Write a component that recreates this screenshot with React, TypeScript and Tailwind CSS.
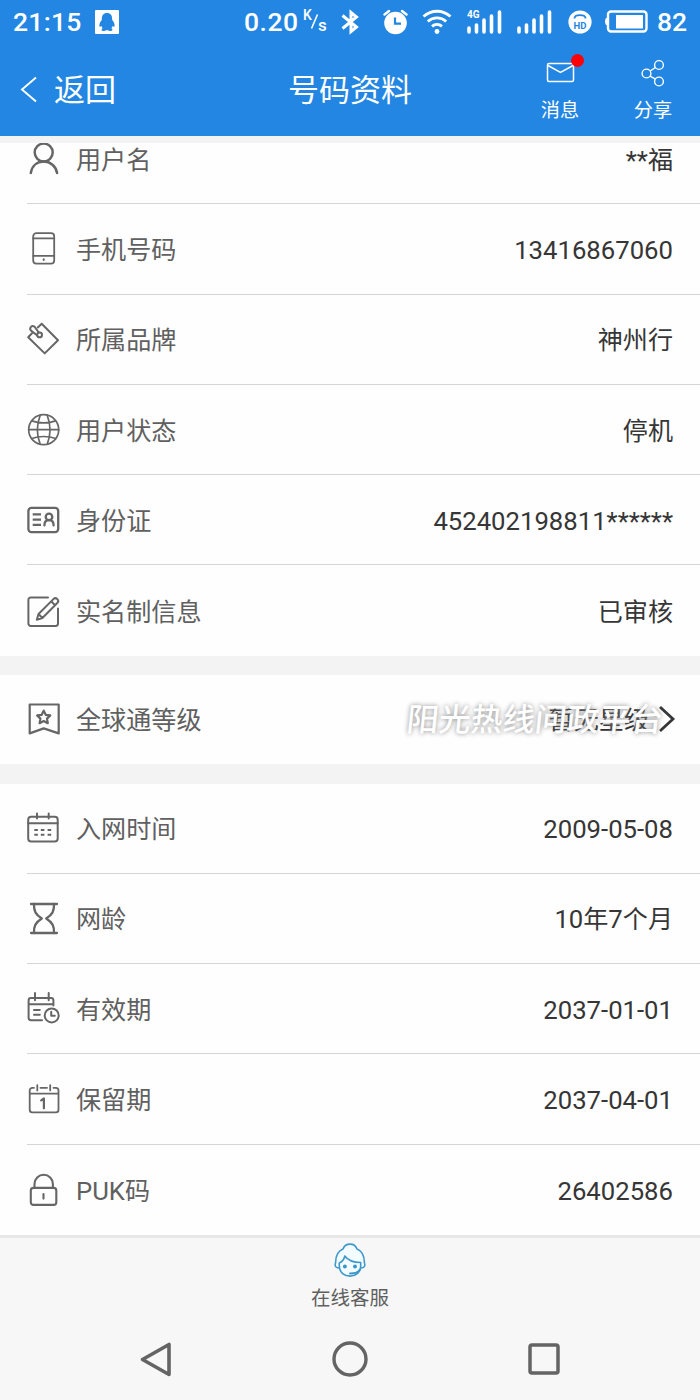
import React from "react";
import type { ReactNode } from "react";

function Icon({ children, w = 1.9 }: { children: ReactNode; w?: number }) {
  return (
    <svg className="h-9 w-9 shrink-0" viewBox="0 0 36 36" fill="none" stroke="#666" strokeWidth={w} strokeLinecap="round" strokeLinejoin="round">
      {children}
    </svg>
  );
}

const icons: Record<string, ReactNode> = {
  user: (
    <Icon w={2.5}>
      <circle cx="17.7" cy="11.6" r="9" />
      <path d="M4.8 32C6 25 11 20.6 17.7 20.6S29.9 25 31.1 32" />
    </Icon>
  ),
  phone: (
    <Icon w={1.8}>
      <rect x="7.2" y="2.2" width="21" height="30.4" rx="3.2" />
      <path d="M7.2 7.4h21M7.2 24.8h21" />
      <path d="M17.7 28.3v.8" strokeWidth="2" />
    </Icon>
  ),
  tag: (
    <Icon w={2}>
      <path d="M11.8 5.4 15.7 1.8 32 18.3 18.7 31.4 2.2 15.2 6 11.3" />
      <path d="M5 8.6C2.7 5.8 6 2.7 8.5 4.7l4.3 5.8M5 8.6l6 4.6" />
      <circle cx="13.6" cy="12.9" r="2.4" />
    </Icon>
  ),
  globe: (
    <Icon w={1.7}>
      <circle cx="17.7" cy="17.7" r="15" />
      <path d="M2.7 17.7h30M14.2 3.2c-3.5 9-3.5 20 0 29M21.2 3.2c3.5 9 3.5 20 0 29M5.8 8.9c7 2.7 16.8 2.7 23.8 0M5.8 26.5c7-2.7 16.8-2.7 23.8 0" />
    </Icon>
  ),
  idcard: (
    <Icon w={2.3}>
      <rect x="2.4" y="5.9" width="29.8" height="24.2" rx="3" />
      <path d="M6.7 12.4h8.3M6.7 17.6h8.3M6.7 22.9h8.3" strokeLinecap="butt" />
      <circle cx="23" cy="14.9" r="3.3" />
      <path d="M18.4 23.4c0-3.3 2-5.2 4.6-5.2s4.6 1.9 4.6 5.2" />
    </Icon>
  ),
  edit: (
    <Icon w={2}>
      <path d="M22 4.4H4.8a2.4 2.4 0 0 0-2.4 2.4v23.8A2.4 2.4 0 0 0 4.8 33h24.8a2.4 2.4 0 0 0 2.4-2.4V15.6" />
      <path d="M10.8 26.7 12.5 21 27.4 6.1a2.7 2.7 0 0 1 3.9 3.9L16.4 25zM25.2 8.3l3.9 3.9M12.5 21l3.9 4" />
    </Icon>
  ),
  badge: (
    <Icon w={2.2}>
      <path d="M3.7 2.5h29v28.9l-15-5-14 5z" />
      <path d="m17.7 8.6 2 4.2 4.6.6-3.3 3.2.8 4.6-4.1-2.2-4.1 2.2.8-4.6-3.3-3.2 4.6-.6z" />
    </Icon>
  ),
  calendar: (
    <Icon w={2}>
      <rect x="2.2" y="5.8" width="29.5" height="24.8" rx="3" />
      <path d="M2.2 12.3h29.5M11 2.6v5M22.7 2.6v5" />
      <path d="M8.3 19h3.6M14.8 19h3.6M21.6 19h3.6M8.3 23.7h3.6M14.8 23.7h3.6M21.6 23.7h3.6" strokeLinecap="butt" />
    </Icon>
  ),
  hourglass: (
    <Icon w={2.3}>
      <path d="M5 3h26M5 32h26" />
      <path d="M8 3c-.3 7 1.5 10.5 7.800 14.500C9.500 21.500 7.700 25 8 32M28 3c.3 7-1.500 10.500-7.800 14.500C26.500 21.500 28.300 25 28 32" />
    </Icon>
  ),
  validity: (
    <Icon w={2}>
      <path d="M27.4 14.5V9.4A2.4 2.4 0 0 0 25 7H5a2.4 2.4 0 0 0-2.4 2.4v17.4A2.4 2.4 0 0 0 5 29.2h11M2.6 13.2h24.8M9 2v7.2M22.7 2v7.2M8 19h5.8M8 23.7h5.8" />
      <circle cx="25.7" cy="24.4" r="7" />
      <path d="M25.2 20.7v4.1h3.6" />
    </Icon>
  ),
  reserve: (
    <Icon w={1.8}>
      <path d="M8 5.8H6.3a2.6 2.6 0 0 0-2.6 2.6v19.3a2.6 2.6 0 0 0 2.6 2.6h23.6a2.6 2.6 0 0 0 2.6-2.6V8.4a2.6 2.6 0 0 0-2.6-2.6h-2.4M3.7 11.7h28.8M14.5 5.8h6.5M11.3 3.2v5.2M24.2 3.2v5.2" />
      <path d="m15.2 18.3 2.7-1.8v9.8" strokeWidth="2.2" />
    </Icon>
  ),
  lock: (
    <Icon w={2.1}>
      <rect x="4.8" y="15.9" width="25.5" height="17" rx="2.6" />
      <path d="M8.5 15.9V12a9.2 9.2 0 0 1 18.4 0v3.9M17.5 22v4.6" />
    </Icon>
  ),
};

// Latin and digit runs are set slightly larger than the Han glyphs beside them.
function Mixed({ text }: { text: string }) {
  const runs = text.match(/[\x00-\x7f]+|[^\x00-\x7f]+/g) ?? [];
  return (
    <>
      {runs.map((run, i) => (
        <span key={i} className={run.charCodeAt(0) < 128 ? "-mt-0.5 text-[25.7px]" : "text-[25.1px]"}>
          {run}
        </span>
      ))}
    </>
  );
}

function Row({ icon, label, value, last, first }: { icon: string; label: string; value: string; last?: boolean; first?: boolean }) {
  return (
    <div className={first ? "-mt-[29px] pl-[27px]" : "pl-[27px]"}>
      <div className={last ? "flex h-[90.3px] items-center pr-[27px]" : "flex h-[90.3px] items-center border-b border-[#d5d5d5] pr-[27px]"}>
        <div className="-ml-px pt-px">{icons[icon]}</div>
        <span className="ml-3.5 flex h-10 items-center whitespace-nowrap pt-1 leading-9 text-[#606060]"><Mixed text={label} /></span>
        <span className="ml-auto flex h-10 items-center whitespace-nowrap pt-1 leading-9 text-[#363636]"><Mixed text={value} /></span>
      </div>
    </div>
  );
}

function Bars() {
  return <path d="M2 23v4M9.5 20v7M17 15v12M24.500 11v16M32.500 7v20" stroke="white" strokeWidth="3.6" strokeLinecap="round" />;
}

function StatusBar() {
  return (
    <div className="flex h-[43px] items-center pl-[13px] pr-3 text-[26.5px] font-medium leading-none">
      <span className="w-[82px] pt-px tracking-[0.3px]">21:15</span>
      <svg className="h-6 w-6" viewBox="0 0 24 24">
        <rect width="24" height="24" rx="1" fill="white" />
        <path d="M12 3C8.500 3 6.500 5.500 6.800 10 5 12 4 14.500 4.500 16.500c.4.700 1.200-.1 2-.6.1.9.5 1.600 1.200 2.300-1.200.5-1.700 2-.4 2.500 1.600.5 3.700.2 4.700-.6 1 .8 3.100 1.100 4.700.6 1.300-.5.800-2-.4-2.500.7-.7 1.100-1.400 1.200-2.300.8.500 1.600 1.300 2 .6.500-2-.5-4.500-2.300-6.500C17.500 5.500 15.500 3 12 3z" fill="#2386e2" />
      </svg>
      <span className="ml-[125px] w-[59px] pt-px tracking-[0.5px]">0.20</span>
      <svg className="h-7 w-6" viewBox="0 -2 24 28" fill="white">
        <text x="0" y="9.5" fontFamily="Roboto" fontSize="14" fontWeight="500">K</text>
        <path d="m8.5 18.500 6-14" stroke="white" strokeWidth="1.6" />
        <text x="15" y="21" fontFamily="Roboto" fontSize="17" fontWeight="500">s</text>
      </svg>
      <svg className="ml-3 h-7 w-6" viewBox="0 0 24 28" fill="none" stroke="white" strokeWidth="3">
        <path d="m3.500 7.500 14 11.500-5.500 4.500V4.500L17.500 9l-14 11.500" />
      </svg>
      <svg className="ml-5 h-7 w-[26px]" viewBox="0 0 26 28">
        <circle cx="12.5" cy="15" r="11.3" fill="white" />
        <path d="M1.5 6.500 6 3M23.500 6.500 19 3" stroke="white" strokeWidth="2.4" strokeLinecap="round" />
        <path d="M12 9.500v6.200h6" fill="none" stroke="#2386e2" strokeWidth="2.2" />
      </svg>
      <svg className="ml-[13px] h-7 w-[30px]" viewBox="0 1 30 28" fill="none" stroke="white" strokeWidth="2.9">
        <path d="M1.500 9.500c8-7 19-7 27 0M5.800 14.500c5.500-4.800 12.900-4.800 18.400 0M10 19.300c3-2.600 7-2.600 10 0" />
        <circle cx="15" cy="24.5" r="2.4" fill="white" stroke="none" />
      </svg>
      <svg className="ml-[15px] h-[34px] w-9" viewBox="0 0 36 34">
        <Bars />
        <text x="0" y="13" fill="white" fontFamily="Roboto" fontSize="10" fontWeight="700">4G</text>
      </svg>
      <svg className="ml-[14px] h-[34px] w-9" viewBox="0 0 36 34"><Bars /></svg>
      <svg className="ml-[15px] h-6 w-6" viewBox="0 0 24 24">
        <circle cx="12" cy="12" r="11.6" fill="white" />
        <path d="M6.500 8.500C6.500 4 17.500 4 17.500 8.500" fill="none" stroke="#2386e2" strokeWidth="1.9" />
        <text x="12" y="18.5" textAnchor="middle" fill="#2386e2" fontFamily="Roboto" fontSize="9.5" fontWeight="700">HD</text>
      </svg>
      <svg className="ml-3 h-6 w-11" viewBox="0 0 44 24">
        <rect x="4" y="1.5" width="38.5" height="20" rx="3" fill="none" stroke="white" strokeWidth="2.4" />
        <path d="M12 5h27v13.500H12z" fill="white" />
        <path d="M4 8v7H2q-2-3.500 0-7z" fill="white" />
      </svg>
      <span className="ml-[9px] pt-px">82</span>
    </div>
  );
}

export default function App() {
  return (
    <div className="flex h-[1400px] w-[700px] flex-col overflow-hidden bg-[#f3f3f3] font-['Roboto','Noto_Sans_CJK_SC',sans-serif]">
      <header className="h-[136px] shrink-0 bg-[#2386e2] text-white">
        <StatusBar />
        <div className="grid h-[93px] grid-cols-[288px_1fr_211px]">
          <div className="flex h-[93px] items-center pl-5">
            <svg className="h-7 w-[18px]" viewBox="0 0 18 28" fill="none" stroke="white" strokeWidth="1.9"><path d="M16 1.500 2 13.500l14 12" /></svg>
            <span className="ml-4 pt-[2px] text-[31px] leading-none">返回</span>
          </div>
          <h1 className="flex h-[93px] items-center pt-[2px] text-[31px] font-normal leading-none">号码资料</h1>
          <div className="flex pt-[14px]">
            <div className="ml-[34px] flex w-[74px] flex-col items-center">
              <div className="relative flex h-8 items-center">
                <svg className="ml-px h-[22px] w-[29px]" viewBox="0 0 29 22" fill="none" stroke="white" strokeWidth="1.5">
                  <rect x="1.5" y="1.5" width="26" height="18" rx="1.5" /><path d="m2 3.500 12.500 7L27 3.500" />
                </svg>
                <span className="absolute -right-[9px] -top-[3px] h-[13px] w-[13px] rounded-full bg-[#fb0208]" />
              </div>
              <span className="mt-3 text-[19.2px] leading-5">消息</span>
            </div>
            <div className="ml-[19px] flex w-[74px] flex-col items-center">
              <svg className="h-8 w-[26px]" viewBox="0 0 26 32" fill="none" stroke="white" strokeWidth="1.4">
                <circle cx="6.5" cy="16.5" r="4.4" /><circle cx="19" cy="8" r="4.4" /><circle cx="19" cy="24.5" r="4.4" />
                <path d="m10.200 14 5.100-3.500M10 19.200l5.500 3" />
              </svg>
              <span className="mt-3 text-[19.2px] leading-5">分享</span>
            </div>
          </div>
        </div>
      </header>

      <section className="mt-[7px] h-[512.5px] shrink-0 overflow-hidden bg-[#fefefe]">
        <Row first icon="user" label="用户名" value="**福" />
        <Row icon="phone" label="手机号码" value="13416867060" />
        <Row icon="tag" label="所属品牌" value="神州行" />
        <Row icon="globe" label="用户状态" value="停机" />
        <Row icon="idcard" label="身份证" value="452402198811******" />
        <Row last icon="edit" label="实名制信息" value="已审核" />
      </section>

      <section className="relative mt-[19px] flex h-[89.5px] shrink-0 items-center bg-[#fefefe] pl-[26px] pr-6">
        <div className="pt-px">{icons.badge}</div>
        <span className="ml-3.5 pt-[3px] text-[25.1px] text-[#606060]">全球通等级</span>
        <span className="ml-auto pt-[3px] text-[25.1px] text-[#303030]">暂无星级</span>
        <svg className="ml-[9px] h-7 w-[18px]" viewBox="0 0 18 28" fill="none" stroke="#363636" strokeWidth="2.8"><path d="m2 2 13 12L2 26" /></svg>
        <span className="absolute left-[407px] top-[25px] -skew-x-6 whitespace-nowrap text-[32px] font-medium leading-10 text-white [text-shadow:0_0_5px_#888]">阳光热线问政平台</span>
      </section>

      <section className="mt-[19.5px] h-[451.5px] shrink-0 bg-[#fefefe]">
        <Row icon="calendar" label="入网时间" value="2009-05-08" />
        <Row icon="hourglass" label="网龄" value="10年7个月" />
        <Row icon="validity" label="有效期" value="2037-01-01" />
        <Row icon="reserve" label="保留期" value="2037-04-01" />
        <Row last icon="lock" label="PUK码" value="26402586" />
      </section>

      <footer className="flex flex-1 flex-col border-t-[3px] border-[#e7e7e7] bg-[#f7f7f7]">
        <div className="flex h-[81px] flex-col items-center pt-1">
          <svg className="h-9 w-9" viewBox="0 0 36 36" fill="none" stroke="#3e98cb" strokeWidth="1.6" strokeLinejoin="round" strokeLinecap="round">
            <path d="M7.300 26C3.500 26 2.500 24 3.600 20.500c0-7 2.400-11.500 7.400-13.500C13.500.5 22.500.5 25 7c5 2 7.400 6.500 7.400 13.500C33.500 24 32.500 26 28.700 26" fill="#f3fcff" />
            <path d="M7.300 21v3C7.300 37.500 28.700 37.500 28.700 24v-3.500c-6.700 0-12.700-2-15.900-6.500-.6 3-2.200 5.500-5.500 7z" fill="#f3fcff" />
            <circle cx="12.900" cy="24.500" r="1.200" fill="#287dae" /><circle cx="23" cy="24.500" r="1.200" fill="#287dae" />
            <path d="M28 27.500c-1.300 2.800-4 4-10 4" strokeWidth="2" />
          </svg>
          <span className="mt-[9px] text-[19.5px] leading-6 text-[#606060]">在线客服</span>
        </div>
        <nav className="flex h-[80px] items-center justify-between pl-[136px] pr-[136px]">
          <svg className="h-10 w-10" viewBox="0 0 40 40" fill="none" stroke="#646464" strokeWidth="3.6" strokeLinejoin="round"><path d="M33 5.500v30L6.500 20.500z" /></svg>
          <svg className="h-10 w-10" viewBox="0 0 40 40" fill="none" stroke="#646464" strokeWidth="3.4"><circle cx="20" cy="20" r="16" /></svg>
          <svg className="h-10 w-10" viewBox="0 0 40 40" fill="none" stroke="#646464" strokeWidth="3.5"><rect x="6" y="6" width="28" height="28" rx="2" /></svg>
        </nav>
      </footer>
    </div>
  );
}
